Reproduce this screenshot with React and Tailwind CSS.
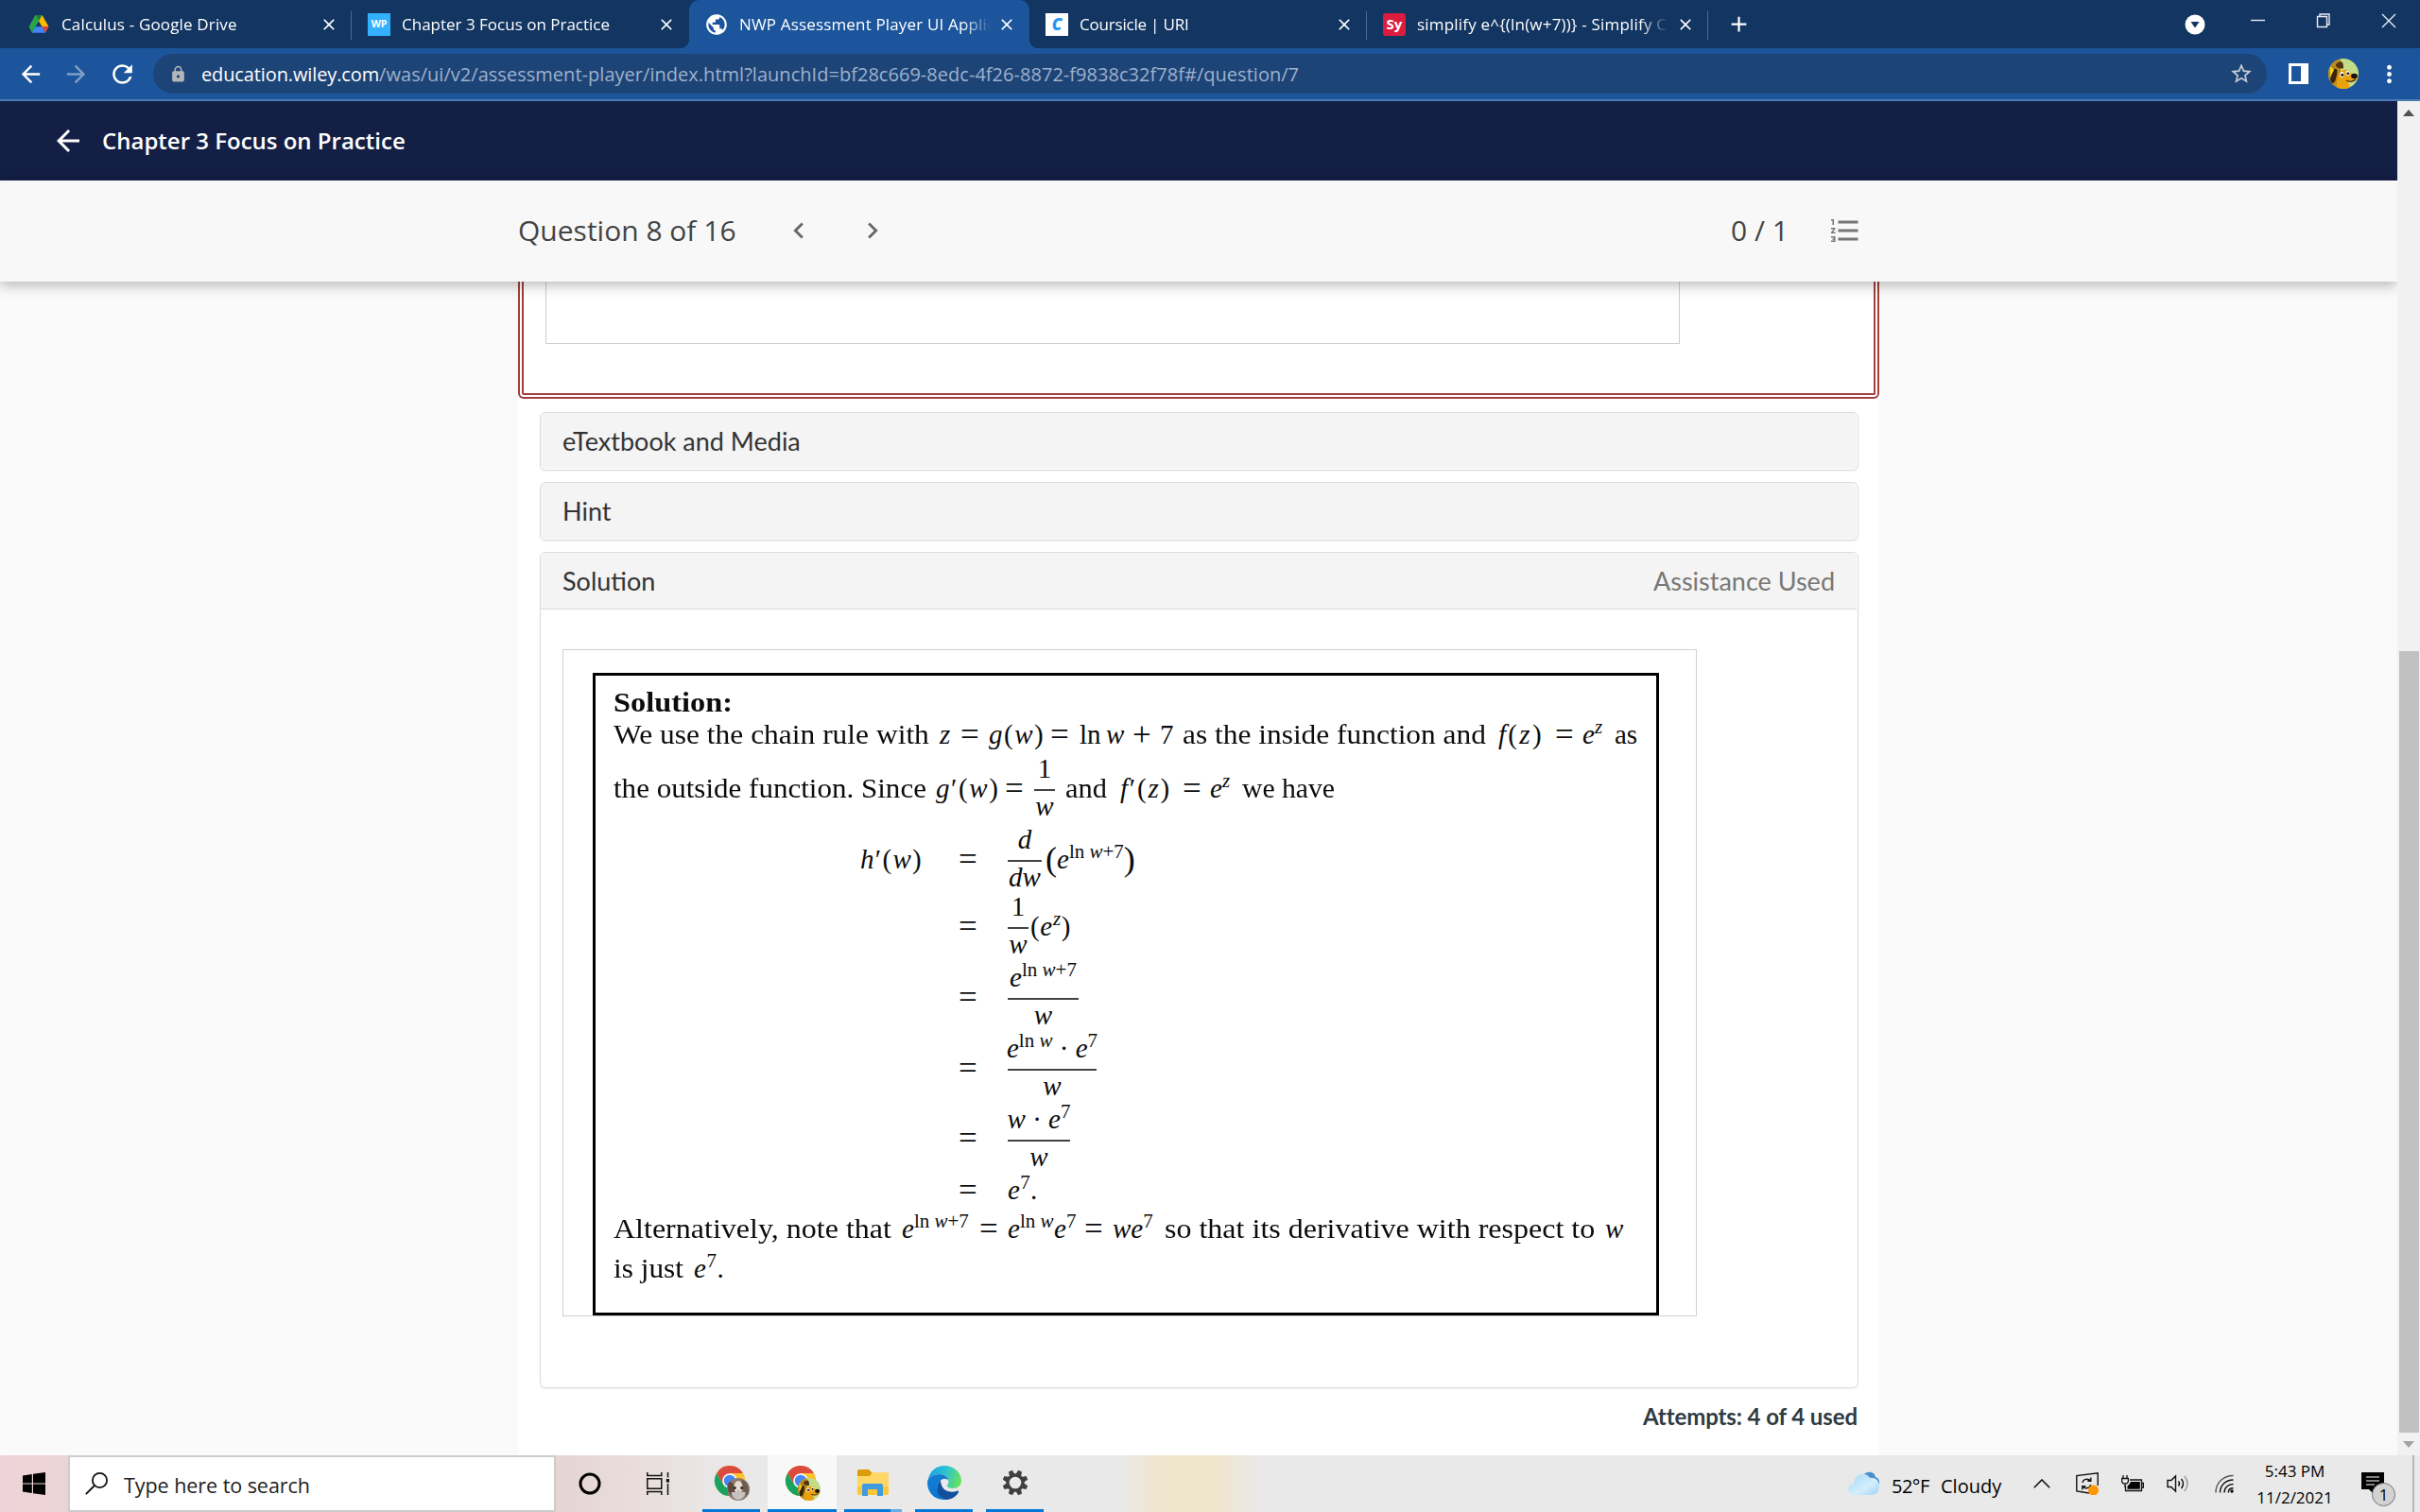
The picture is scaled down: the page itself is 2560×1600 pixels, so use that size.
import {
  MdAdd,
  MdArrowBack,
  MdArrowForward,
  MdChevronLeft,
  MdChevronRight,
  MdClose,
  MdFormatListNumbered,
  MdLock,
  MdMoreVert,
  MdPublic,
  MdRefresh,
  MdStarBorder,
} from "react-icons/md";

/* ---------- icons ---------- */

function DriveIcon() {
  return (
    <svg viewBox="0 0 24 22" className="h-[21px] w-[24px]">
      <path d="M8.2 1h7.6l-3.8 6.6L4.6 20.6 1 14z" fill="#2ba24c" />
      <path d="M8.2 1h7.6L23 14h-7.4z" fill="#ffba00" />
      <path d="M8.2 1h7.6L12 7.6z" fill="#188038" />
      <path d="M15.6 14H23l-3.6 6.6z" fill="#ea4335" />
      <path d="M8.4 14h7.2l3.8 6.6H4.6z" fill="#4285f4" />
    </svg>
  );
}

function DogFace({ className }) {
  return (
    <svg viewBox="0 0 32 32" className={className}>
      <defs>
        <clipPath id="dogClip">
          <circle cx="16" cy="16" r="16" />
        </clipPath>
      </defs>
      <g clipPath="url(#dogClip)">
        <rect width="32" height="32" fill="#c3dc86" />
        <path d="M0 0h13v32H0z" fill="#b98a1c" />
        <path d="M9 32c-1-8 1-18 7-20 4-1 7 1 8 4 3 0 7 1 7 4-1 3-6 5-10 4 1 3 2 6 1 8z" fill="#e9a20c" />
        <path d="M5 12c4-3 5 0 4 5s-2 9-5 9-2-10 1-14z" fill="#3a230b" />
        <path d="M8 7c0-3 6-5 7-3s1 5 1 6-8 1-8-3z" fill="#54320f" />
        <path d="M2 8l4 4-4 8z" fill="#f2d31b" />
        <ellipse cx="14.500" cy="17" rx="2.200" ry="3" fill="#fff" />
        <ellipse cx="20.500" cy="15.500" rx="2" ry="2.800" fill="#fff" />
        <circle cx="14.800" cy="17.300" r="1.500" fill="#1c1208" />
        <circle cx="20.700" cy="15.800" r="1.400" fill="#1c1208" />
        <ellipse cx="27.500" cy="18.500" rx="3.400" ry="2.800" fill="#1a120a" />
        <path d="M19 23c4 2 8 1 10-1" stroke="#3a230b" strokeWidth="1.200" fill="none" />
      </g>
    </svg>
  );
}

function CatFace({ className }) {
  return (
    <svg viewBox="0 0 32 32" className={className}>
      <circle cx="16" cy="16" r="16" fill="#8d7a6c" />
      <path d="M4 5c6 2 8 8 7 22C3 25-3 12 4 5z" fill="#5e4a3f" />
      <path d="M21 2c8 4 12 14 8 22-5 2-8-14-8-22z" fill="#6f5c50" />
      <ellipse cx="16" cy="13" rx="6" ry="9" fill="#e4dbd3" />
      <path d="M6 20h20c0 5-4 10-10 11-6-1-9-5-10-11z" fill="#c4c2c2" />
      <circle cx="11" cy="14" r="2" fill="#2d2520" />
      <circle cx="21" cy="14" r="2" fill="#2d2520" />
      <path d="M14 18h4l-2 2z" fill="#a87867" />
    </svg>
  );
}

function ChromeIcon({ children }) {
  return (
    <span className="relative block h-[38px] w-[38px]">
      <svg viewBox="0 0 34 34" className="h-[34px] w-[34px]">
        <circle cx="17" cy="17" r="16" fill="#fbc02d" />
        <path d="M3.100 9A16 16 0 0 1 30.900 9H17L10.100 21z" fill="#dd4b3e" />
        <path d="M3.100 9A16 16 0 0 0 17 33L23.900 21H17l-6.900 0z" fill="#1aa260" />
        <path d="M30.900 9A16 16 0 0 1 17 33L23.900 21 17 9z" fill="#fbc02d" />
        <circle cx="17" cy="17" r="7.800" fill="#fff" />
        <circle cx="17" cy="17" r="6.200" fill="#4587f4" />
      </svg>
      <span className="absolute right-0 bottom-0 block h-[24px] w-[24px]">{children}</span>
    </span>
  );
}

function FolderIcon() {
  return (
    <svg viewBox="0 0 33 28" className="h-[28px] w-[33px]">
      <path d="M0 2Q0 0 2 0h10l3 3v4H0z" fill="#dc9b0b" />
      <path d="M0 7h13l3-4h15q2 0 2 2v20q0 2-2 2H2q-2 0-2-2z" fill="#ffd766" />
      <path d="M0 18h33v7q0 2-2 2H2q-2 0-2-2z" fill="#fbc837" />
      <path d="M5 28V17q0-2 2-2h18q2 0 2 2v11h-6v-7H11v7z" fill="#3f9ce2" />
    </svg>
  );
}

function EdgeIcon() {
  return (
    <svg viewBox="0 0 36 36" className="h-[36px] w-[36px]">
      <defs>
        <linearGradient id="edgeTop" x1="0" y1="0.300" x2="1" y2="0.500">
          <stop offset="0" stopColor="#1a9fe4" />
          <stop offset="0.500" stopColor="#2cc3d2" />
          <stop offset="1" stopColor="#67e35a" />
        </linearGradient>
        <linearGradient id="edgeSide" x1="0" y1="0" x2="0.600" y2="1">
          <stop offset="0" stopColor="#1480d4" />
          <stop offset="1" stopColor="#0a74d0" />
        </linearGradient>
      </defs>
      <path d="M1 14C3 5 10 0 18 0c10 0 18 7 18 16 0 5-4 8-9 8-4 0-6-1-6-3 0-1 1.500-2 1.500-5C22.500 12 18 9 13 9 7 9 3 11 1 14z" fill="url(#edgeTop)" />
      <path d="M0 18C0 12 6 9 13 9c5 0 9 3 9.500 7-2-3-6-3-9 0-6 6-3 16 8 19.600C9 38 0 29 0 18z" fill="url(#edgeSide)" />
      <path d="M14 15.500C8 21 9 33 20 36c6 0 11-4 13-8 .5-1.300-.5-1.800-1.500-1.300C25 29.500 14 27 14 15.500z" fill="#124f9c" />
    </svg>
  );
}

function GearIcon() {
  return (
    <svg viewBox="0 0 28 28" className="h-[28px] w-[28px]">
      <g fill="#404040">
        {[22.5, 67.5, 112.5, 157.5, 202.5, 247.5, 292.5, 337.5].map((a) => (
          <path key={a} d="M11 5.800L11.900.6h4.200L17 5.800z" transform={`rotate(${a} 14 14)`} />
        ))}
      </g>
      <circle cx="14" cy="14" r="8" fill="none" stroke="#404040" strokeWidth="3.400" />
    </svg>
  );
}

function CloudIcon() {
  return (
    <svg viewBox="0 0 34 26" className="h-[26px] w-[34px]">
      <defs>
        <linearGradient id="cloudFill" x1="0" y1="0" x2="1" y2="1">
          <stop offset="0" stopColor="#a5d8f8" />
          <stop offset="0.600" stopColor="#d4eefc" />
          <stop offset="1" stopColor="#9fd2f5" />
        </linearGradient>
      </defs>
      <path d="M16 4c4-5 12-4 13 2 4 1 5 6 3 9L18 9z" fill="#4a8fd0" />
      <path d="M7 25c-9 0-9-11-1-12C6 3 18-1 23 7c6-1 10 3 10 9 0 5-3 9-8 9z" fill="url(#cloudFill)" />
    </svg>
  );
}

/* ---------- browser chrome ---------- */

function Tab({ icon, title, active, divider, width }) {
  return (
    <div
      className={`relative flex h-full shrink-0 items-center pr-[14px] pl-[17px] ${width} ${
        active ? "rounded-t-[11px] bg-[#1c559c]" : ""
      }`}
    >
      {active && (
        <>
          <span className="absolute bottom-0 -left-[10px] h-[10px] w-[10px] bg-[radial-gradient(circle_at_0_0,transparent_10px,#1c559c_10.5px)]" />
          <span className="absolute -right-[10px] bottom-0 h-[10px] w-[10px] bg-[radial-gradient(circle_at_100%_0,transparent_10px,#1c559c_10.5px)]" />
        </>
      )}
      <span className="flex h-6 w-6 shrink-0 items-center justify-center">{icon}</span>
      <span className="ml-3 w-[266px] shrink-0 [mask-image:linear-gradient(to_right,black_236px,transparent_266px)] text-[17px] tracking-[0.16px] whitespace-nowrap text-white">
        {title}
      </span>
      <MdClose className="ml-auto h-5 w-5 shrink-0 text-white" />
      {divider && <span className="absolute top-[12px] right-0 h-[30px] w-px bg-[#4d6c93]" />}
    </div>
  );
}

function TabStrip() {
  return (
    <div className="flex h-[51px] shrink-0 bg-[#123561] pl-[12px]">
      <Tab width="w-[360px]" icon={<DriveIcon />} title="Calculus - Google Drive" divider />
      <Tab
        width="w-[357px]"
        icon={
          <span className="flex h-6 w-6 items-center justify-center bg-[#33b1ff] text-[10.5px] font-bold text-white">
            WP
          </span>
        }
        title={<span className="tracking-normal">Chapter 3 Focus on Practice</span>}
      />
      <Tab
        width="w-[360px]"
        icon={<MdPublic className="h-[26px] w-[26px] shrink-0 text-white" />}
        title="NWP Assessment Player UI Applic"
        active
      />
      <Tab
        width="w-[357px]"
        icon={
          <span className="flex h-6 w-6 items-center justify-center bg-white text-[17px] font-extrabold text-[#2a94f4] italic">
            C
          </span>
        }
        title={<span className="tracking-[-0.2px]">Coursicle | URI</span>}
        divider
      />
      <Tab
        width="w-[361px]"
        icon={
          <span className="flex h-6 w-6 items-center justify-center rounded-[3px] bg-[#db1c3f] text-[15px] font-bold text-white">
            Sy
          </span>
        }
        title={<span className="tracking-[0.2px]">simplify e^{"{"}(ln(w+7)){"}"} - Simplify C</span>}
        divider
      />
      <div className="flex w-[65px] items-center justify-center">
        <MdAdd className="h-[27px] w-[27px] text-white" />
      </div>
      <svg viewBox="0 0 22 22" className="mt-[15px] ml-[439px] h-[22px] w-[22px]">
        <circle cx="11" cy="11" r="10.500" fill="#fff" />
        <path d="M6.500 8h9L11 14.500z" fill="#123561" />
      </svg>
      <svg viewBox="0 0 160 20" className="mt-[12px] ml-[43px] h-[20px] w-[160px]" fill="none" stroke="#e8edf4" strokeWidth="1.400">
        <path d="M5 9.500h15" />
        <path d="M75.500 5.500h10v11h-10zM78 5.500V3h10v11h-2.500" />
        <path d="M144 3l14 14M158 3l-14 14" />
      </svg>
    </div>
  );
}

function Toolbar() {
  return (
    <div className="flex h-[56px] shrink-0 items-center border-b-2 border-[#4a7bb5] bg-[#1c559c] pl-[18px]">
      <MdArrowBack className="h-[29px] w-[29px] text-white" />
      <MdArrowForward className="ml-[19px] h-[29px] w-[29px] text-[#7f9fc8]" />
      <MdRefresh className="ml-[19px] h-[31px] w-[31px] text-white" />
      <div className="ml-[17px] flex h-[42px] w-[2236px] items-center rounded-full bg-[#1d4477] pr-[14px] pl-[17px]">
        <MdLock className="h-[19px] w-[19px] text-[#b4b6ba]" />
        <div className="ml-[15px] pt-px text-[20px] whitespace-nowrap text-[#9eb1cc]">
          <span className="tracking-[-0.12px] text-white">education.wiley.com</span>
          <span className="tracking-[0.03px]">
            /was/ui/v2/assessment-player/index.html?launchId=bf28c669-8edc-4f26-8872-f9838c32f78f#/question/7
          </span>
        </div>
        <MdStarBorder className="ml-auto h-[26px] w-[26px] text-[#c3cbd6]" />
      </div>
      <span className="ml-[23px] h-[22px] w-[21px] border-[3px] border-r-[8px] border-white" />
      <DogFace className="ml-[21px] h-8 w-8" />
      <MdMoreVert className="ml-[18px] h-[29px] w-[29px] text-white" />
    </div>
  );
}

/* ---------- math typesetting ---------- */

function Sup({ children }) {
  return <span className="align-[11px] text-[21px] leading-[0]">{children}</span>;
}

function V({ children }) {
  return <i>{children}</i>;
}

function Cell({ w, children }) {
  return <span className={`shrink-0 whitespace-nowrap ${w}`}>{children}</span>;
}

/* A run of words, set wider than the font's own letterforms. */
function Words({ w, stretch, children }) {
  return (
    <span className={`shrink-0 whitespace-nowrap ${w}`}>
      <span className={`inline-block origin-left ${stretch}`}>{children}</span>
    </span>
  );
}

function Op({ w, children }) {
  return <span className={`shrink-0 text-[35px] leading-[29px] whitespace-nowrap ${w}`}>{children}</span>;
}

function Frac({ w, top, bottom }) {
  return (
    <span className={`flex shrink-0 flex-col items-center pt-[4px] whitespace-nowrap ${w}`}>
      <span className="leading-[43px]">{top}</span>
      <span className="h-[2px] w-full shrink-0 bg-[#444]" />
      <span className="pb-[11px] leading-[32px]">{bottom}</span>
    </span>
  );
}

function Line({ h, children }) {
  return <div className={`flex items-center ${h}`}>{children}</div>;
}

/* One step of the derivation; the left side is blank after the first step. */
function Step({ h, left, children }) {
  return (
    <div className={`flex items-center ${h}`}>
      <span className="w-[104px] shrink-0 whitespace-nowrap">{left}</span>
      <Op w="w-[52px]">=</Op>
      {children}
    </div>
  );
}

const lnW7 = (
  <Sup>
    ln <V>w</V>+7
  </Sup>
);

function SolutionBox() {
  return (
    <div className="ml-[31px] h-[680px] w-[1128px] border-[3px] border-black pt-[11px] pl-[19px] font-['Liberation_Serif',serif] text-[29px] leading-[29px] text-[#0c0c0c]">
      <Line h="h-[34px]">
        <b className="inline-block origin-left scale-x-[1.117]">Solution:</b>
      </Line>
      <Line h="h-[34px]">
        <Words w="w-[345px]" stretch="scale-x-[1.085]">We use the chain rule with</Words>
        <Cell w="w-[22px]"><V>z</V></Cell>
        <Op w="w-[30px]">=</Op>
        <Cell w="w-[65px] tracking-[1.5px]"><V>g</V>(<V>w</V>)</Cell>
        <Op w="w-[31px]">=</Op>
        <Cell w="w-[28px]">ln</Cell>
        <Cell w="w-[28px]"><V>w</V></Cell>
        <Op w="w-[29px]">+</Op>
        <Cell w="w-[24px]">7</Cell>
        <Words w="w-[334px]" stretch="scale-x-[1.083]">as the inside function and</Words>
        <Cell w="w-[60px] tracking-[2.3px]"><V>f</V>(<V>z</V>)</Cell>
        <Op w="w-[29px]">=</Op>
        <Cell w="w-[34px]"><V>e</V><Sup><V>z</V></Sup></Cell>
        <Cell w="w-[30px]">as</Cell>
      </Line>
      <Line h="h-[80px]">
        <Words w="w-[341px]" stretch="scale-x-[1.07]">the outside function. Since</Words>
        <Cell w="w-[73px] tracking-[1.6px]"><V>g</V>′(<V>w</V>)</Cell>
        <Op w="w-[31px]">=</Op>
        <Frac w="w-[22px]" top="1" bottom={<V>w</V>} />
        <Words w="ml-[11px] w-[58px]" stretch="scale-x-[1.05]">and</Words>
        <Cell w="w-[66px] tracking-[1.8px]"><V>f</V>′(<V>z</V>)</Cell>
        <Op w="w-[29px]">=</Op>
        <Cell w="w-[34px]"><V>e</V><Sup><V>z</V></Sup></Cell>
        <Words w="w-[120px]" stretch="scale-x-[1.023]">we have</Words>
      </Line>

      <div className="pl-[261px]">
        <Step h="h-[70px]" left={<span className="tracking-[1.3px]"><V>h</V>′(<V>w</V>)</span>}>
          <Frac w="w-[36px]" top={<V>d</V>} bottom={<V>dw</V>} />
          <span className="ml-[4px] text-[36px]">(</span>
          <span><V>e</V>{lnW7}</span>
          <span className="text-[36px]">)</span>
        </Step>
        <Step h="h-[72px]">
          <Frac w="w-[22px]" top="1" bottom={<V>w</V>} />
          <span className="ml-[2px] tracking-[0.7px]">(<V>e</V><Sup><V>z</V></Sup>)</span>
        </Step>
        <Step h="h-[78px]">
          <Frac w="w-[75px]" top={<><V>e</V>{lnW7}</>} bottom={<V>w</V>} />
        </Step>
        <Step h="h-[72px]">
          <Frac
            w="w-[94px]"
            top={<><V>e</V><Sup>ln <V>w</V></Sup> · <V>e</V><Sup>7</Sup></>}
            bottom={<V>w</V>}
          />
        </Step>
        <Step h="h-[77px]">
          <Frac w="w-[66px]" top={<><V>w</V> · <V>e</V><Sup>7</Sup></>} bottom={<V>w</V>} />
        </Step>
        <Step h="h-[32px]">
          <span className="tracking-[0.3px]"><V>e</V><Sup>7</Sup>.</span>
        </Step>
      </div>

      <Line h="h-[50px]">
        <Words w="w-[305px]" stretch="scale-x-[1.104]">Alternatively, note that</Words>
        <Cell w="w-[82px]"><V>e</V>{lnW7}</Cell>
        <Op w="w-[30px]">=</Op>
        <Cell w="w-[49px]"><V>e</V><Sup>ln <V>w</V></Sup></Cell>
        <Cell w="w-[32px]"><V>e</V><Sup>7</Sup></Cell>
        <Op w="w-[30px]">=</Op>
        <Cell w="w-[55px]"><V>we</V><Sup>7</Sup></Cell>
        <Words w="w-[466px]" stretch="scale-x-[1.104]">so that its derivative with respect to</Words>
        <Cell w="w-[20px]"><V>w</V></Cell>
      </Line>
      <Line h="h-[34px]">
        <Words w="w-[85px]" stretch="scale-x-[1.08]">is just</Words>
        <Cell w="w-[40px] tracking-[0.5px]"><V>e</V><Sup>7</Sup>.</Cell>
      </Line>
    </div>
  );
}

/* ---------- page ---------- */

function Accordion({ title, className = "", note, children }) {
  return (
    <section className={`mx-[23px] w-[1395px] rounded-[6px] border border-[#dcdcdc] bg-white shadow-[0_1px_2px_rgba(0,0,0,0.06)] ${className}`}>
      <div
        className={`mr-px flex items-center justify-between rounded-t-[5px] bg-[#f4f4f4] px-[23px] font-[Lato,sans-serif] text-[27px] text-[#333] ${
          children ? "h-[60px] border-b border-[#dcdcdc] pt-[2px]" : "mb-px h-[59px] pt-px"
        }`}
      >
        <span>{title}</span>
        {note && <span className="text-[#777]">{note}</span>}
      </div>
      {children}
    </section>
  );
}

function Page() {
  return (
    <div className="flex h-[1433px] shrink-0 bg-[#fafafa]">
      <div className="flex w-[2536px] flex-col overflow-hidden">
        <header className="flex h-[84px] shrink-0 items-center bg-[#141f45] pl-[54px] text-white">
          <MdArrowBack className="h-9 w-9" />
          <h1 className="ml-[18px] text-[24px] font-semibold">Chapter 3 Focus on Practice</h1>
        </header>

        <div className="relative z-10 flex h-[107px] shrink-0 items-center bg-[#f8f8f8] pb-[2px] pl-[548px] text-[#444] shadow-[0_3px_14px_rgba(0,0,0,0.3)]">
          <span className="w-[276px] text-[30px] whitespace-nowrap">Question 8 of 16</span>
          <MdChevronLeft className="ml-[4px] h-[34px] w-[34px] text-[#666]" />
          <MdChevronRight className="ml-[44px] h-[34px] w-[34px] text-[#666]" />
          <span className="ml-[891px] w-[103px] text-[30px] whitespace-nowrap">0 / 1</span>
          <MdFormatListNumbered className="h-[36px] w-[36px] text-[#757575]" />
        </div>

        <main className="ml-[548px] flex h-[1242px] w-[1440px] flex-col bg-white">
          <div className="h-[124px] shrink-0 rounded-b-[6px] border-[6px] border-t-0 border-double border-[#a3403e] pl-[23px]">
            <div className="h-[66px] w-[1200px] border border-t-0 border-[#cfcfcf]" />
          </div>

          <Accordion title="eTextbook and Media" className="mt-[14px] h-[62px]" />
          <Accordion title="Hint" className="mt-[12px] h-[62px]" />
          <Accordion title="Solution" note="Assistance Used" className="mt-[12px] h-[885px]">
            <div className="mt-[42px] ml-[23px] h-[706px] w-[1200px] border border-[#d0d0d0] pt-[24px]">
              <SolutionBox />
            </div>
          </Accordion>

          <p className="mt-[12px] mr-[23px] text-right font-[Lato,sans-serif] text-[24px] font-bold tracking-[-0.1px] text-[#2f3b42]">
            Attempts: 4 of 4 used
          </p>
        </main>
      </div>

      <div className="flex w-6 flex-col items-center bg-[#f1f1f1]">
        <svg viewBox="0 0 12 7" className="mt-[9px] h-[7px] w-[12px]">
          <path d="M0 7L6 0l6 7z" fill="#505050" />
        </svg>
        <span className="mt-[566px] h-[827px] w-[21px] bg-[#c1c1c1]" />
        <svg viewBox="0 0 12 7" className="mt-[9px] h-[7px] w-[12px]">
          <path d="M0 0l6 7 6-7z" fill="#a3a3a3" />
        </svg>
      </div>
    </div>
  );
}

/* ---------- taskbar ---------- */

function TaskButton({ active, stacked, children }) {
  return (
    <div className="flex w-[75px] justify-center">
      <div className={`flex flex-col items-center ${active ? "w-[73px] bg-[#f8f8f8]" : "w-[61px]"}`}>
        <div className="flex h-[57px] items-center justify-center">{children}</div>
        <div className="flex h-[3px] w-full bg-[#0078d7]">
          {stacked && <span className="ml-auto w-3 bg-[#66aee7]" />}
        </div>
      </div>
    </div>
  );
}

function TrayCell({ w, children }) {
  return <div className={`flex shrink-0 items-center justify-center ${w}`}>{children}</div>;
}

function Taskbar() {
  return (
    <div className="flex h-[60px] shrink-0 bg-[linear-gradient(to_right,#eed4d8_0px,#ecd3d6_72px,#e5d5d3_590px,#e9dfdc_690px,#e9e9e9_770px,#e9e9e9_1185px,#f0e5cd_1225px,#f0e5cd_1285px,#e9e9e9_1335px,#e9e9e9_2560px)] text-black">
      <div className="flex w-[72px] items-center justify-center">
        <svg viewBox="0 0 24 24" className="h-6 w-6">
          <path d="M0 3.400L9.800 2v9.600H0zM11 1.800L24 0v11.600H11zM0 12.600h9.800V22L0 20.600zM11 12.600h13V24l-13-1.800z" />
        </svg>
      </div>
      <div className="flex w-[516px] items-center border-2 border-[#ccc] bg-white pl-[16px]">
        <svg viewBox="0 0 24 24" className="h-6 w-6" fill="none" stroke="#111" strokeWidth="1.800">
          <circle cx="15.500" cy="8.500" r="7.600" />
          <path d="M10 14L.8 23.200" />
        </svg>
        <span className="ml-[17px] pt-[4px] text-[21.500px] tracking-[-0.05px] text-[#222]">Type here to search</span>
      </div>
      <TrayCell w="w-[72px]">
        <svg viewBox="0 0 24 24" className="h-6 w-6">
          <circle cx="12" cy="12" r="10" fill="none" stroke="#000" strokeWidth="3" />
        </svg>
      </TrayCell>
      <TrayCell w="w-[76px] pr-1">
        <svg viewBox="0 0 24 24" className="h-6 w-6" fill="none" stroke="#111" strokeWidth="1.500">
          <path d="M.8 0v3.500h15V0M.8 6.700h15v10.600h-15zM.8 24v-3.500h15V24M22.500 0v5.500M22.500 12v12" />
          <path d="M20.800 7h3.200v3.600h-3.200z" fill="#111" stroke="none" />
        </svg>
      </TrayCell>
      <TaskButton>
        <ChromeIcon><CatFace className="h-6 w-6" /></ChromeIcon>
      </TaskButton>
      <TaskButton active>
        <ChromeIcon><DogFace className="h-6 w-6" /></ChromeIcon>
      </TaskButton>
      <TaskButton stacked><FolderIcon /></TaskButton>
      <TaskButton><EdgeIcon /></TaskButton>
      <TaskButton><GearIcon /></TaskButton>

      <div className="ml-auto flex">
        <div className="flex w-[180px] items-center text-[20px]">
          <CloudIcon />
          <span className="ml-[12px] w-[52px] pt-[6px] tracking-[-0.5px]">52°F</span>
          <span className="pt-[6px]">Cloudy</span>
        </div>
        <TrayCell w="w-[50px]">
          <svg viewBox="0 0 18 10" className="h-[10px] w-[18px]" fill="none" stroke="#111" strokeWidth="1.600">
            <path d="M.8 9.200L9 1l8.200 8.200" />
          </svg>
        </TrayCell>
        <TrayCell w="w-[46px]">
          <svg viewBox="0 0 24 24" className="h-6 w-6" fill="none" stroke="#111" strokeWidth="1.400">
            <path d="M14 22L.8 20V3.500L23.200.8V14" />
            <path d="M7 11c.5-4 6-5 8.500-2M15.800 5.500v3.700h-3.600M6.800 18.500v-3.700h3.600M15.600 13c-.5 4-6 5-8.500 2" />
            <circle cx="18.500" cy="19" r="5.500" fill="#ff9800" stroke="none" />
          </svg>
        </TrayCell>
        <TrayCell w="w-[50px]">
          <svg viewBox="0 0 24 18" className="h-[18px] w-[24px]" fill="none" stroke="#111" strokeWidth="1.300">
            <path d="M9 5h12.500v11.500H4.500V11M21.800 8.500h1.600v4.500h-1.600" />
            <path d="M10 7h9.800v7.800H6.500v-3L9 9z" fill="#000" stroke="none" />
            <path d="M2 0v3.500M6 0v3.500M.6 3.500h6.800V7L6 8.800H2L.6 7zM4 9v4" />
          </svg>
        </TrayCell>
        <TrayCell w="w-[46px]">
          <svg viewBox="0 0 24 20" className="h-[20px] w-[24px]" fill="none" stroke="#111" strokeWidth="1.400">
            <path d="M1 6.500h3.800L9.500 2v16l-4.700-4.500H1z" />
            <path d="M12.500 7.500q2 2.500 0 5M15.500 5q4 5 0 10" />
            <path d="M18.800 2q6.500 8 0 16" stroke="#999" />
          </svg>
        </TrayCell>
        <TrayCell w="w-[52px]">
          <svg viewBox="0 0 20 20" className="h-[20px] w-[20px]" fill="none" stroke="#111" strokeWidth="1.400">
            <path d="M1 19.500C1 9 9 1.500 19.500 1.500" stroke="#555" />
            <path d="M5.500 19.500c0-8 6-13.500 14-13.500M10 19.500c0-5.500 4-9 9.500-9M14.300 19.500c0-3 2-4.700 5.200-4.700" />
            <circle cx="18" cy="18" r="1.800" fill="#111" stroke="none" />
          </svg>
        </TrayCell>
        <div className="flex w-[97px] flex-col items-center justify-center pt-px text-[17px] leading-[28px] whitespace-nowrap">
          <span>5:43 PM</span>
          <span>11/2/2021</span>
        </div>
        <TrayCell w="w-[76px] pl-1 pt-3">
          <div className="relative h-[36px] w-[36px]">
            <svg viewBox="0 0 36 36" className="h-[36px] w-[36px]">
              <path d="M0 0h24v18H14v6l-6-6H0z" fill="#000" />
              <path d="M5 5h14M5 9h14M5 13h9" stroke="#fff" strokeWidth="1.200" />
            </svg>
            <span className="absolute right-0 bottom-0 flex h-[25px] w-[25px] items-center justify-center rounded-full border border-[#777] bg-[#d2d2d2] text-[17px]">
              1
            </span>
          </div>
        </TrayCell>
        <span className="mr-[6px] w-[2px] bg-[#b8b8b8]" />
      </div>
    </div>
  );
}

export default function App() {
  return (
    <div className="flex h-[1600px] w-[2560px] flex-col overflow-hidden font-['Open_Sans','Noto_Sans',sans-serif]">
      <TabStrip />
      <Toolbar />
      <Page />
      <Taskbar />
    </div>
  );
}
